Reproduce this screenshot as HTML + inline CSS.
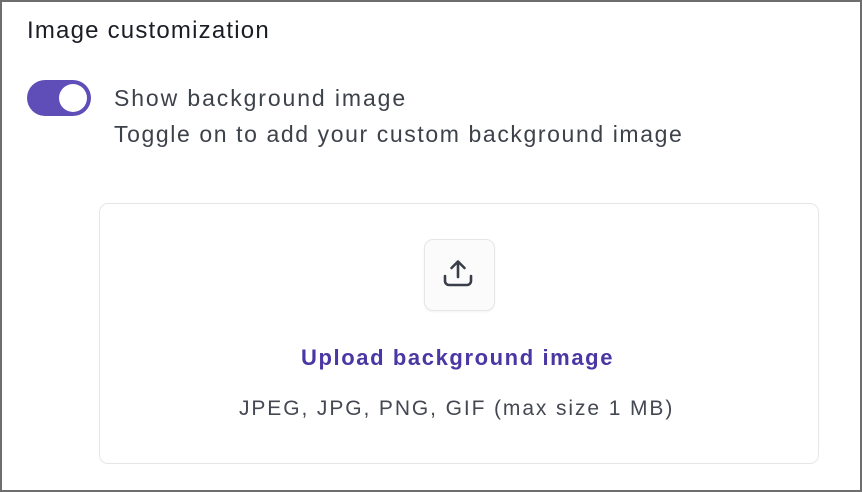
<!DOCTYPE html>
<html><head><style>
body{margin:0;width:862px;height:492px;overflow:hidden;background:#fff;font-family:"Liberation Sans",sans-serif;}
.frame{position:absolute;left:0;top:0;width:862px;height:492px;box-sizing:border-box;border:2px solid #6e6e6e;}
.t{position:absolute;white-space:nowrap;}
</style></head><body>
<div class="frame"></div>
<div class="t" style="left:27px;top:17px;font-size:24px;letter-spacing:1.2px;color:#1a1d24;">Image customization</div>
<div style="position:absolute;left:27px;top:80px;width:64px;height:36px;border-radius:18px;background:#5f4db8;"></div>
<div style="position:absolute;left:59px;top:84px;width:28px;height:28px;border-radius:50%;background:#fff;"></div>
<div class="t" style="left:114px;top:85px;font-size:23px;letter-spacing:1.9px;color:#3d414a;">Show background image</div>
<div class="t" style="left:114px;top:121px;font-size:23px;letter-spacing:1.6px;color:#3d414a;">Toggle on to add your custom background image</div>
<div style="position:absolute;left:99px;top:203px;width:718px;height:259px;border:1px solid #e6e6ea;border-radius:9px;"></div>
<div style="position:absolute;left:424px;top:239px;width:69px;height:70px;border:1px solid #e6e6ea;border-radius:9px;background:#fbfbfc;box-shadow:0 1px 2px rgba(0,0,0,0.05);"></div>
<svg style="position:absolute;left:440px;top:256px" width="36" height="36" viewBox="0 0 36 36" fill="none" stroke="#3a3e48" stroke-width="2.6" stroke-linecap="round" stroke-linejoin="round">
<path d="M18 6V21M11.5 12L18 5.5L24.5 12"/><path d="M5 20V25a4 4 0 0 0 4 4H27a4 4 0 0 0 4-4V20"/></svg>
<div class="t" style="left:301px;top:345px;font-size:22px;letter-spacing:1.6px;font-weight:bold;color:#4b37a3;">Upload background image</div>
<div class="t" style="left:239px;top:397px;font-size:21px;letter-spacing:1.9px;color:#444852;">JPEG, JPG, PNG, GIF (max size 1 MB)</div>
</body></html>
